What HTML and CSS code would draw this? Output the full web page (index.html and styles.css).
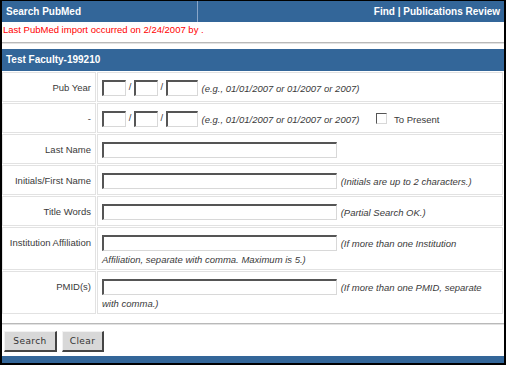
FILE: index.html
```html
<!DOCTYPE html>
<html lang="en">
<head>
    <meta charset="UTF-8">
    <title>Search PubMed</title>
    <link rel="stylesheet" href="styles.css">
</head>
<body>
    <div class="frame">
        <div class="topbar">
            <div class="topbar-title">Search PubMed</div>
            <div class="topbar-links">Find | Publications Review</div>
        </div>
        <div class="message">Last PubMed import occurred on 2/24/2007 by .</div>
        <div class="rule"></div>
        <div class="section-bar">Test Faculty-199210</div>

        <div class="form-grid">
            <div class="label">Pub Year</div>
            <div class="field">
                <input type="text" class="box box-mm"> / <input type="text" class="box box-dd"> / <input type="text" class="box box-yy">
                <span class="hint">(e.g., 01/01/2007 or 01/2007 or 2007)</span>
            </div>

            <div class="label">-</div>
            <div class="field">
                <input type="text" class="box box-mm"> / <input type="text" class="box box-dd"> / <input type="text" class="box box-yy">
                <span class="hint">(e.g., 01/01/2007 or 01/2007 or 2007)</span>
                <label class="present"><input type="checkbox" class="check">To Present</label>
            </div>

            <div class="label">Last Name</div>
            <div class="field">
                <input type="text" class="box box-long">
            </div>

            <div class="label">Initials/First Name</div>
            <div class="field">
                <input type="text" class="box box-long">
                <span class="hint">(Initials are up to 2 characters.)</span>
            </div>

            <div class="label">Title Words</div>
            <div class="field">
                <input type="text" class="box box-long">
                <span class="hint">(Partial Search OK.)</span>
            </div>

            <div class="label">Institution Affiliation</div>
            <div class="field">
                <input type="text" class="box box-long">
                <span class="hint">(If more than one Institution Affiliation, separate with comma. Maximum is 5.)</span>
            </div>

            <div class="label">PMID(s)</div>
            <div class="field">
                <input type="text" class="box box-long">
                <span class="hint">(If more than one PMID, separate with comma.)</span>
            </div>
        </div>

        <div class="rule rule-bottom"></div>
        <div class="buttons">
            <button class="btn btn-search">Search</button>
            <button class="btn btn-clear">Clear</button>
        </div>
        <div class="bottombar"></div>
    </div>
</body>
</html>
```

FILE: styles.css
```css
body {
    margin: 0;
    background-color: #ffffff;
    font-family: "Liberation Sans", Arial, sans-serif;
}
.frame {
    box-sizing: border-box;
    width: 506px;
    height: 365px;
    border-style: solid;
    border-color: #000000;
    border-width: 1px 2px 2px 2px;
    display: flex;
    flex-direction: column;
}
.topbar {
    display: flex;
    height: 21px;
    background-color: #336699;
    color: #ffffff;
    font-size: 10px;
    font-weight: bold;
    line-height: 21px;
}
.topbar-title {
    width: 191px;
    padding-left: 4px;
    border-right: 1px solid #8aa6c8;
}
.topbar-links {
    flex: 1;
    text-align: right;
    padding-right: 4px;
}
.message {
    margin-top: 1px;
    padding-left: 1px;
    color: #ff0000;
    font-size: 9.5px;
    line-height: 14px;
}
.rule {
    margin-top: 5px;
    height: 0;
    border-top: 1px solid #b9b9b9;
    border-bottom: 1px solid #e2e2e2;
}
.section-bar {
    margin-top: 5px;
    height: 22px;
    padding-left: 4px;
    background-color: #336699;
    color: #ffffff;
    font-size: 10px;
    font-weight: bold;
    line-height: 22px;
}
.form-grid {
    display: grid;
    grid-template-columns: 94px 1fr;
    gap: 1px;
    margin: 1px 1px 0 0;
    color: #3a3a3a;
    font-size: 9.5px;
}
.label,
.field {
    border: 1px solid #e2e2e2;
}
.label {
    padding: 7px 4px 5px 4px;
    line-height: 16px;
    text-align: right;
}
.field {
    padding: 7px 4px 5px 4px;
    line-height: 13px;
}
.box {
    box-sizing: border-box;
    height: 16px;
    margin: 0;
    padding: 0;
    vertical-align: top;
    background-color: #ffffff;
    border-style: solid;
    border-width: 2px 1px 1px 2px;
    border-color: #555555 #d8d8d8 #d8d8d8 #555555;
}
.box-mm,
.box-dd {
    width: 24px;
}
.box-yy {
    width: 32px;
}
.box-long {
    width: 235px;
}
.hint {
    font-style: italic;
    margin-left: 1px;
    position: relative;
    top: 2px;
}
.present {
    margin-left: 14px;
    position: relative;
    top: 2px;
}
.check {
    -webkit-appearance: none;
    appearance: none;
    box-sizing: border-box;
    width: 11px;
    height: 11px;
    margin: 0 7px 0 0;
    vertical-align: top;
    border-style: solid;
    border-width: 1px;
    border-color: #555555 #d8d8d8 #d8d8d8 #555555;
    background-color: #ffffff;
}
.rule-bottom {
    margin-top: 9px;
}
.buttons {
    display: flex;
    gap: 5px;
    margin-top: 6px;
    padding-left: 2px;
}
.btn {
    box-sizing: border-box;
    height: 21px;
    padding: 0;
    background-color: #d8d8d8;
    color: #333333;
    font-family: "DejaVu Sans", Verdana, sans-serif;
    font-size: 9px;
    letter-spacing: 0.4px;
    border-style: solid;
    border-width: 1px 2px 2px 1px;
    border-color: #f2f2f2 #444444 #444444 #f2f2f2;
}
.btn-search {
    width: 53px;
}
.btn-clear {
    width: 42px;
}
.bottombar {
    margin-top: auto;
    height: 7px;
    background-color: #336699;
}
```
